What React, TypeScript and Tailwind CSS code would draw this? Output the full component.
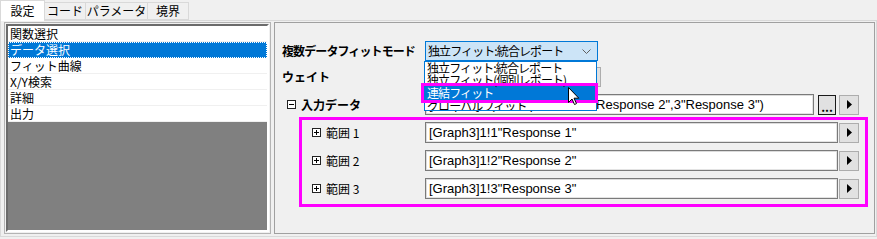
const jp = "font-['Noto_Sans_CJK_JP','Liberation_Sans',sans-serif]";
const lat = "font-['Liberation_Sans','Noto_Sans_CJK_JP',sans-serif]";

const tabs = [
  { label: "設定", w: "w-[45px]", active: true },
  { label: "コード", w: "w-[41px]" },
  { label: "パラメータ", w: "w-[62px]" },
  { label: "境界", w: "w-[41px]" },
];

const items = ["関数選択", "データ選択", "フィット曲線", "X/Y検索", "詳細", "出力"];

function Arrow() {
  return (
    <button className="w-[20px] h-[20px] bg-[#e1e1e1] border border-[#adadad] flex items-center justify-center shrink-0">
      <svg width="5" height="9" viewBox="0 0 5 9">
        <polygon points="0,0 5,4.5 0,9" fill="#000" />
      </svg>
    </button>
  );
}

function Expander({ open }: { open?: boolean }) {
  return (
    <span className="relative inline-block w-[9px] h-[9px] border border-[#222] bg-white shrink-0">
      <span className="absolute left-[1px] top-[3px] w-[5px] h-px bg-black" />
      {!open && <span className="absolute left-[3px] top-[1px] w-px h-[5px] bg-black" />}
    </span>
  );
}

function Field({ text, w }: { text: string; w: string }) {
  return (
    <div
      className={`${w} h-[21px] bg-white border border-[#7a7a7a] shadow-[inset_1px_1px_0_#dcdcdc,inset_-1px_-1px_0_#e3e3e3] flex items-center pl-[3px] text-[13px] ${lat} whitespace-nowrap overflow-hidden`}
    >
      {text}
    </div>
  );
}

export default function App() {
  return (
    <div className={`relative w-[877px] h-[239px] bg-[#f0f0f0] text-black overflow-hidden ${jp}`}>
      {/* tabs */}
      <div className="flex items-end h-[20px]">
        {tabs.map((t) => (
          <div
            key={t.label}
            className={`${t.w} flex items-center justify-center text-[12px] border border-[#d9d9d9] ${
              t.active ? "h-[21px] bg-white border-b-0 relative z-10 -mb-px" : "h-[18px] border-l-0 bg-[#f0f0f0]"
            }`}
          >
            {t.label}
          </div>
        ))}
      </div>

      {/* tab page */}
      <div className="w-[877px] h-[217px] border border-[#d9d9d9] flex pl-[3px] pt-[1px]">
        {/* left list */}
        <div className="w-[267px] h-[212px] border border-[#b4b4b4] p-px">
          <div className="h-full border-t-2 border-l-2 border-t-[#6b6b6b] border-l-[#6b6b6b] border-b-2 border-r-2 border-b-white border-r-white flex flex-col">
            {items.map((it, i) => (
              <div
                key={it}
                className={`h-[16px] shrink-0 flex items-center pl-[2px] text-[12px] leading-none ${
                  i === 1
                    ? "bg-[#0078d7] text-white outline-1 outline-dotted outline-white -outline-offset-1"
                    : "bg-white border-b border-[#f0f0f0]"
                }`}
              >
                {it}
              </div>
            ))}
            <div className="flex-1 bg-[#808080]" />
          </div>
        </div>

        {/* right panel */}
        <div className="ml-[3px] w-[601px] h-[212px] border border-[#a0a0a0] pt-[18px]">
          <div className="flex items-center h-[20px]">
            <div className="w-[150px] pl-[7px] text-[12px] font-bold tracking-[-0.9px]">複数データフィットモード</div>
            <div className="w-[173px] h-[20px] bg-[#cce4f7] border border-[#0078d7] flex items-center justify-between pl-[2px] pr-[6px] text-[12px] tracking-[-0.9px]">
              <span>独立フィット:統合レポート</span>
              <svg width="9" height="5" viewBox="0 0 9 5">
                <polyline points="0.5,0.5 4.5,4.5 8.5,0.5" fill="none" stroke="#606060" strokeWidth="1" />
              </svg>
            </div>
          </div>

          <div className="flex items-center h-[20px] mt-[6px]">
            <div className="w-[150px] pl-[7px] text-[12px] font-bold">ウェイト</div>
            <div className="w-[176px] h-[20px] bg-[#e1e1e1] border border-[#adadad]" />
          </div>

          <div className="flex items-center h-[21px] mt-[7px]">
            <div className="w-[150px] pl-[12px] flex items-center gap-[5px] text-[12px] font-bold">
              <Expander open />
              <span>入力データ</span>
            </div>
            <Field w="w-[389px]" text={'[Graph3]1!(1"Response 1",2"Response 2",3"Response 3")'} />
            <button className="ml-[4px] w-[18px] h-[20px] bg-[#e1e1e1] border border-[#1a1a1a] shadow-[inset_0_0_0_1px_#e1e1e1] flex items-end justify-center pb-[1px] text-[12px] font-bold leading-none">
              ...
            </button>
            <div className="ml-[3px]">
              <Arrow />
            </div>
          </div>

          <div className="mt-[2px] ml-[24px] w-[569px] border-[3px] border-[#ff00ff] pt-[2px] pb-[5px] flex flex-col gap-[7px]">
            {[1, 2, 3].map((n) => (
              <div key={n} className="flex items-center h-[21px]">
                <div className="w-[123px] pl-[10px] flex items-center gap-[5px] text-[12px]">
                  <Expander />
                  <span>範囲 {n}</span>
                </div>
                <Field w="w-[413px]" text={`[Graph3]1!${n}"Response ${n}"`} />
                <div className="ml-[1px]">
                  <Arrow />
                </div>
              </div>
            ))}
          </div>
        </div>
      </div>

      {/* open dropdown list */}
      <div className="absolute left-[424px] top-[61px] w-[173px] h-[50px] bg-white border border-[#0078d7] overflow-hidden text-[12px] tracking-[-0.9px] leading-[12px]">
        <div className="h-[12px] pl-[2px]">独立フィット:統合レポート</div>
        <div className="h-[12px] pl-[2px]">独立フィット(個別レポート)</div>
        <div className="h-[14px] pl-[2px] bg-[#0078d7] text-white flex items-center">連結フィット</div>
        <div className="h-[11px] pl-[2px]">グローバルフィット</div>
      </div>

      {/* highlight box */}
      <div className="absolute left-[421px] top-[83px] w-[177px] h-[20px] border-[3px] border-[#ff00ff]" />

      {/* mouse cursor */}
      <svg className="absolute left-[568px] top-[87px]" width="12" height="19" viewBox="0 0 12 19">
        <polygon
          points="0.5,0.5 0.5,15.5 4,12 6.5,17.5 8.5,16.6 6,11.2 10.8,11.2"
          fill="#fff"
          stroke="#000"
          strokeWidth="1"
        />
      </svg>
    </div>
  );
}
